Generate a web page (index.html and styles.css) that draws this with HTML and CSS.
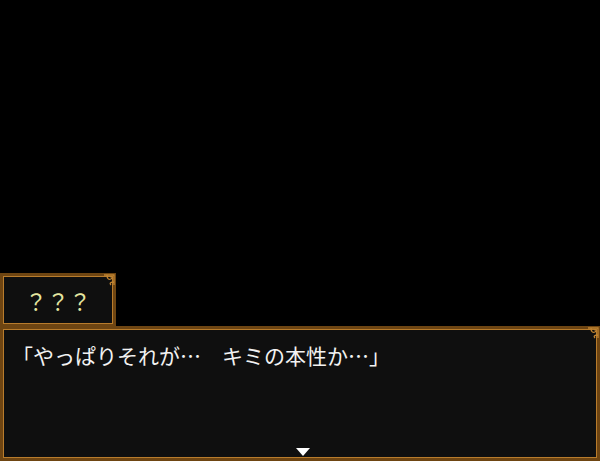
FILE: index.html
```html
<!DOCTYPE html>
<html lang="ja">
	<head>
		<meta charset="utf-8">
		<meta name="viewport" content="width=device-width, initial-scale=1.0">
		<title>Message</title>
		<link rel="stylesheet" href="styles.css">
	</head>
	<body>
		<div class="screen">
			<div class="stage"></div>
			<div class="namebox">
				<span class="name">？？？</span>
				<svg class="corner" width="12" height="12" viewBox="0 0 12 12">
					<path d="M1 1 H11 V11 M4 1 C4 5 6 6 8 5 C10 4 9 2 7 3 M11 8 C8 8 6 9 8 11" fill="none" stroke="#c08432" stroke-width="1.3"/>
				</svg>
			</div>
			<div class="msgbox">
				<p class="msg">「やっぱりそれが…　キミの本性か…」</p>
				<svg class="corner" width="12" height="12" viewBox="0 0 12 12">
					<path d="M1 1 H11 V11 M4 1 C4 5 6 6 8 5 C10 4 9 2 7 3 M11 8 C8 8 6 9 8 11" fill="none" stroke="#c08432" stroke-width="1.3"/>
				</svg>
				<span class="pause"></span>
			</div>
		</div>
	</body>
</html>
```

FILE: styles.css
```css
body {
	margin: 0;
	background-color: #000;
	font-family: "Noto Sans CJK JP", "Noto Sans", sans-serif;
}
.screen {
	width: 600px;
	height: 461px;
	display: flex;
	flex-direction: column;
	overflow: hidden;
}
.stage {
	height: 273px;
}
.namebox {
	position: relative;
	width: 110px;
	height: 48px;
	border: 3px solid #6e4512;
	box-shadow: inset 0 0 0 1px #b87c2c;
	background-color: #0f0f0f;
	display: flex;
	align-items: center;
	justify-content: center;
}
.name {
	color: #e4e6a0;
	font-size: 22px;
	letter-spacing: 0;
}
.msgbox {
	position: relative;
	flex: 1;
	margin-top: -1px;
	border: 3px solid #6e4512;
	box-shadow: inset 0 0 0 1px #b87c2c;
	background-color: #0f0f0f;
}
.msg {
	margin: 10px 0 0 9px;
	color: #f2f2f2;
	font-size: 21px;
	line-height: 32px;
}
.corner {
	position: absolute;
	top: -2px;
	right: -2px;
}
.pause {
	position: absolute;
	left: 293px;
	bottom: 2px;
	width: 0;
	height: 0;
	border-left: 7px solid transparent;
	border-right: 7px solid transparent;
	border-top: 8px solid #fff;
}
```
